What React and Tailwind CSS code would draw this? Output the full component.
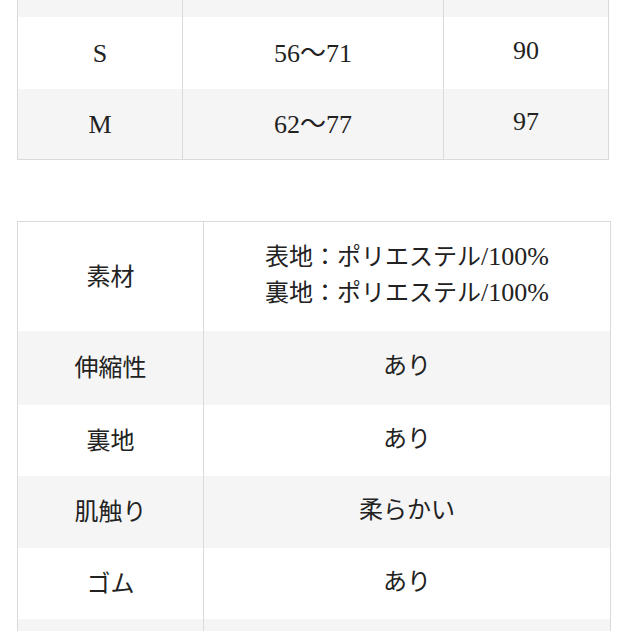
import React from "react";

const font = { fontFamily: '"Liberation Serif", "Noto Sans CJK JP", serif' };

const sizes = [
  { size: "S", waist: "56〜71", hip: "90" },
  { size: "M", waist: "62〜77", hip: "97" },
];

const specs = [
  {
    label: "素材",
    value: [
      ["表地：ポリエステル", "/100%"],
      ["裏地：ポリエステル", "/100%"],
    ],
    h: "h-[109px]",
  },
  { label: "伸縮性", value: [["あり", ""]], h: "h-[74px]" },
  { label: "裏地", value: [["あり", ""]], h: "h-[71px]" },
  { label: "肌触り", value: [["柔らかい", ""]], h: "h-[72px]" },
  { label: "ゴム", value: [["あり", ""]], h: "h-[71px]" },
];

export default function App() {
  return (
    <div className="h-[631px] w-[631px] overflow-hidden bg-white text-[24px] text-[#222]" style={font}>
      {/* size table */}
      <div className="ml-[17px] w-[592px] border-x border-b border-[#dadada] text-[26px]">
        <div className="grid h-[17px] grid-cols-[165px_261px_1fr] bg-[#f5f5f5]">
          <div className="border-r border-[#dadada]" />
          <div className="border-r border-[#dadada]" />
          <div />
        </div>
        {sizes.map((r, i) => (
          <div
            key={r.size}
            className={`grid grid-cols-[165px_261px_1fr] ${i === 0 ? "h-[72px] bg-white" : "h-[70px] bg-[#f5f5f5]"}`}
          >
            <div className="flex items-center justify-center border-r border-[#dadada]">{r.size}</div>
            <div className="flex items-center justify-center border-r border-[#dadada]">{r.waist}</div>
            <div className="flex items-center justify-center pb-[6px]">{r.hip}</div>
          </div>
        ))}
      </div>

      {/* spec table */}
      <div className="ml-[17px] mt-[61px] w-[594px] border-x border-t border-[#dadada]">
        {specs.map((r, i) => (
          <div
            key={r.label}
            className={`grid grid-cols-[186px_1fr] ${r.h} ${i % 2 === 1 ? "bg-[#f5f5f5]" : "bg-white"}`}
          >
            <div className="flex items-center justify-center border-r border-[#dadada]">{r.label}</div>
            <div className="flex flex-col items-center justify-center gap-[6px] pb-[4px]">
              {r.value.map(([jp, num]) => (
                <div key={jp + num} className="leading-[30px]">
                  {jp}
                  {num && <span className="text-[26px]">{num}</span>}
                </div>
              ))}
            </div>
          </div>
        ))}
        <div className="grid h-[40px] grid-cols-[186px_1fr] bg-[#f5f5f5]">
          <div className="border-r border-[#dadada]" />
          <div />
        </div>
      </div>
    </div>
  );
}
